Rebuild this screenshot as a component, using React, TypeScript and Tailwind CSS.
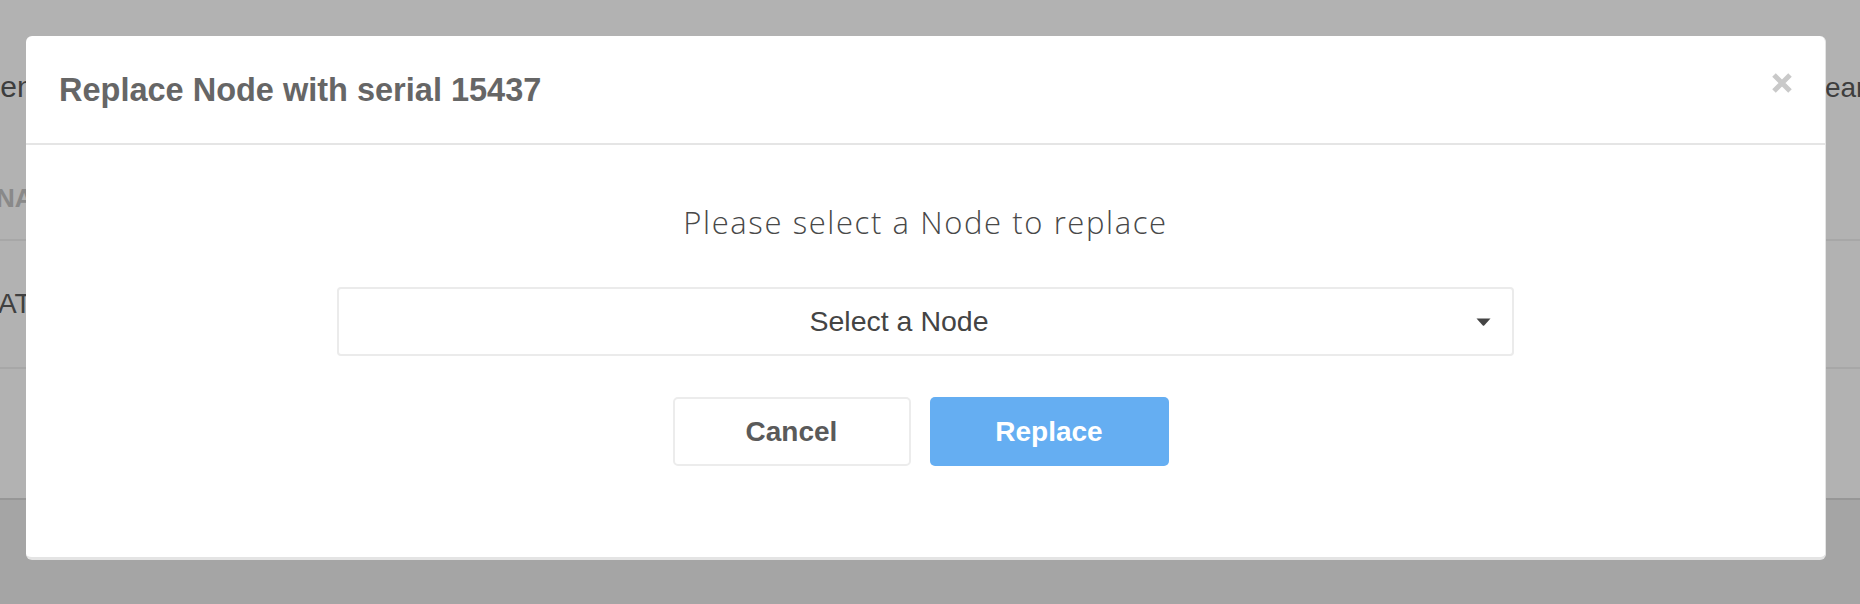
import React from 'react'

const sans = "font-['Liberation_Sans',Arial,sans-serif]"

function CloseIcon() {
  return (
    <svg width="20" height="20" viewBox="0 0 20 20" className="block">
      <path d="M2 2 L18 18 M18 2 L2 18" stroke="#c9c9c9" strokeWidth="5" strokeLinecap="butt" />
    </svg>
  )
}

function Caret() {
  return (
    <svg width="15" height="8" viewBox="0 0 15 8" className="block shrink-0">
      <path d="M0.5 0.5 H14.5 L8.2 7.4 Q7.5 8 6.8 7.4 Z" fill="#444444" />
    </svg>
  )
}

export default function App() {
  return (
    <div className={`relative w-[1860px] h-[604px] overflow-hidden bg-[#ededed] ${sans}`}>
      {/* page behind the dialog */}
      <div className="h-[498px] bg-white shadow-[0_2px_0_#d8d8d8]">
        <div className="flex items-end justify-between h-[102px] text-[30px] leading-none text-[#585858]">
          <span className="ml-[-78px]">Segment</span>
          <span className="mr-[-35px] text-[28px] text-[#5a5a5a]">Search</span>
        </div>
        <div className="h-[139px] border-b-2 border-[#f0f0f0] pt-[83px]">
          <span className="ml-[-4px] text-[26px] leading-none font-bold text-[#c4c4c4]">NAME</span>
        </div>
        <div className="h-[128px] border-b-2 border-[#f0f0f0] pt-[49px]">
          <span className="ml-[-2px] text-[28px] leading-none text-[#5c5c5c]">ATLAS-01</span>
        </div>
      </div>

      {/* backdrop + dialog */}
      <div className="absolute inset-0 bg-black/30">
        <div className="ml-[26px] mt-[36px] w-[1800px] bg-white rounded-[6px] border-r border-b-[3px] border-[#e4e4e4]">
          <div className="relative flex items-center h-[109px] px-[33px] border-b-2 border-[#e5e5e5]">
            <h4 className="text-[32.5px] leading-[40px] font-bold text-[#666666]">Replace Node with serial 15437</h4>
            <button className="absolute right-[33px] top-[37px]">
              <CloseIcon />
            </button>
          </div>

          <div className="flex flex-col items-center pt-[57px] pb-[91px]">
            <p className="font-['Open_Sans',sans-serif] font-light text-[31px] tracking-[1.6px] leading-[40px] text-[#484848]">
              Please select a Node to replace
            </p>

            <div className="mt-[45px] flex items-center w-[1177px] h-[69px] border-2 border-[#ebebeb] rounded-[4px] bg-white">
              <span className="flex-1 text-center text-[28.5px] text-[#444444]">Select a Node</span>
              <span className="ml-[17px] mr-[21px]">
                <Caret />
              </span>
            </div>

            <div className="mt-[41px] flex gap-[19px] pr-[10px]">
              <button className="w-[238px] h-[69px] border-2 border-[#ececec] rounded-[5px] bg-white text-[28px] font-bold text-[#5a5a5a]">
                Cancel
              </button>
              <button className="w-[239px] h-[69px] rounded-[5px] bg-[#65aef2] text-[28px] font-bold text-white">
                Replace
              </button>
            </div>
          </div>
        </div>
      </div>
    </div>
  )
}
